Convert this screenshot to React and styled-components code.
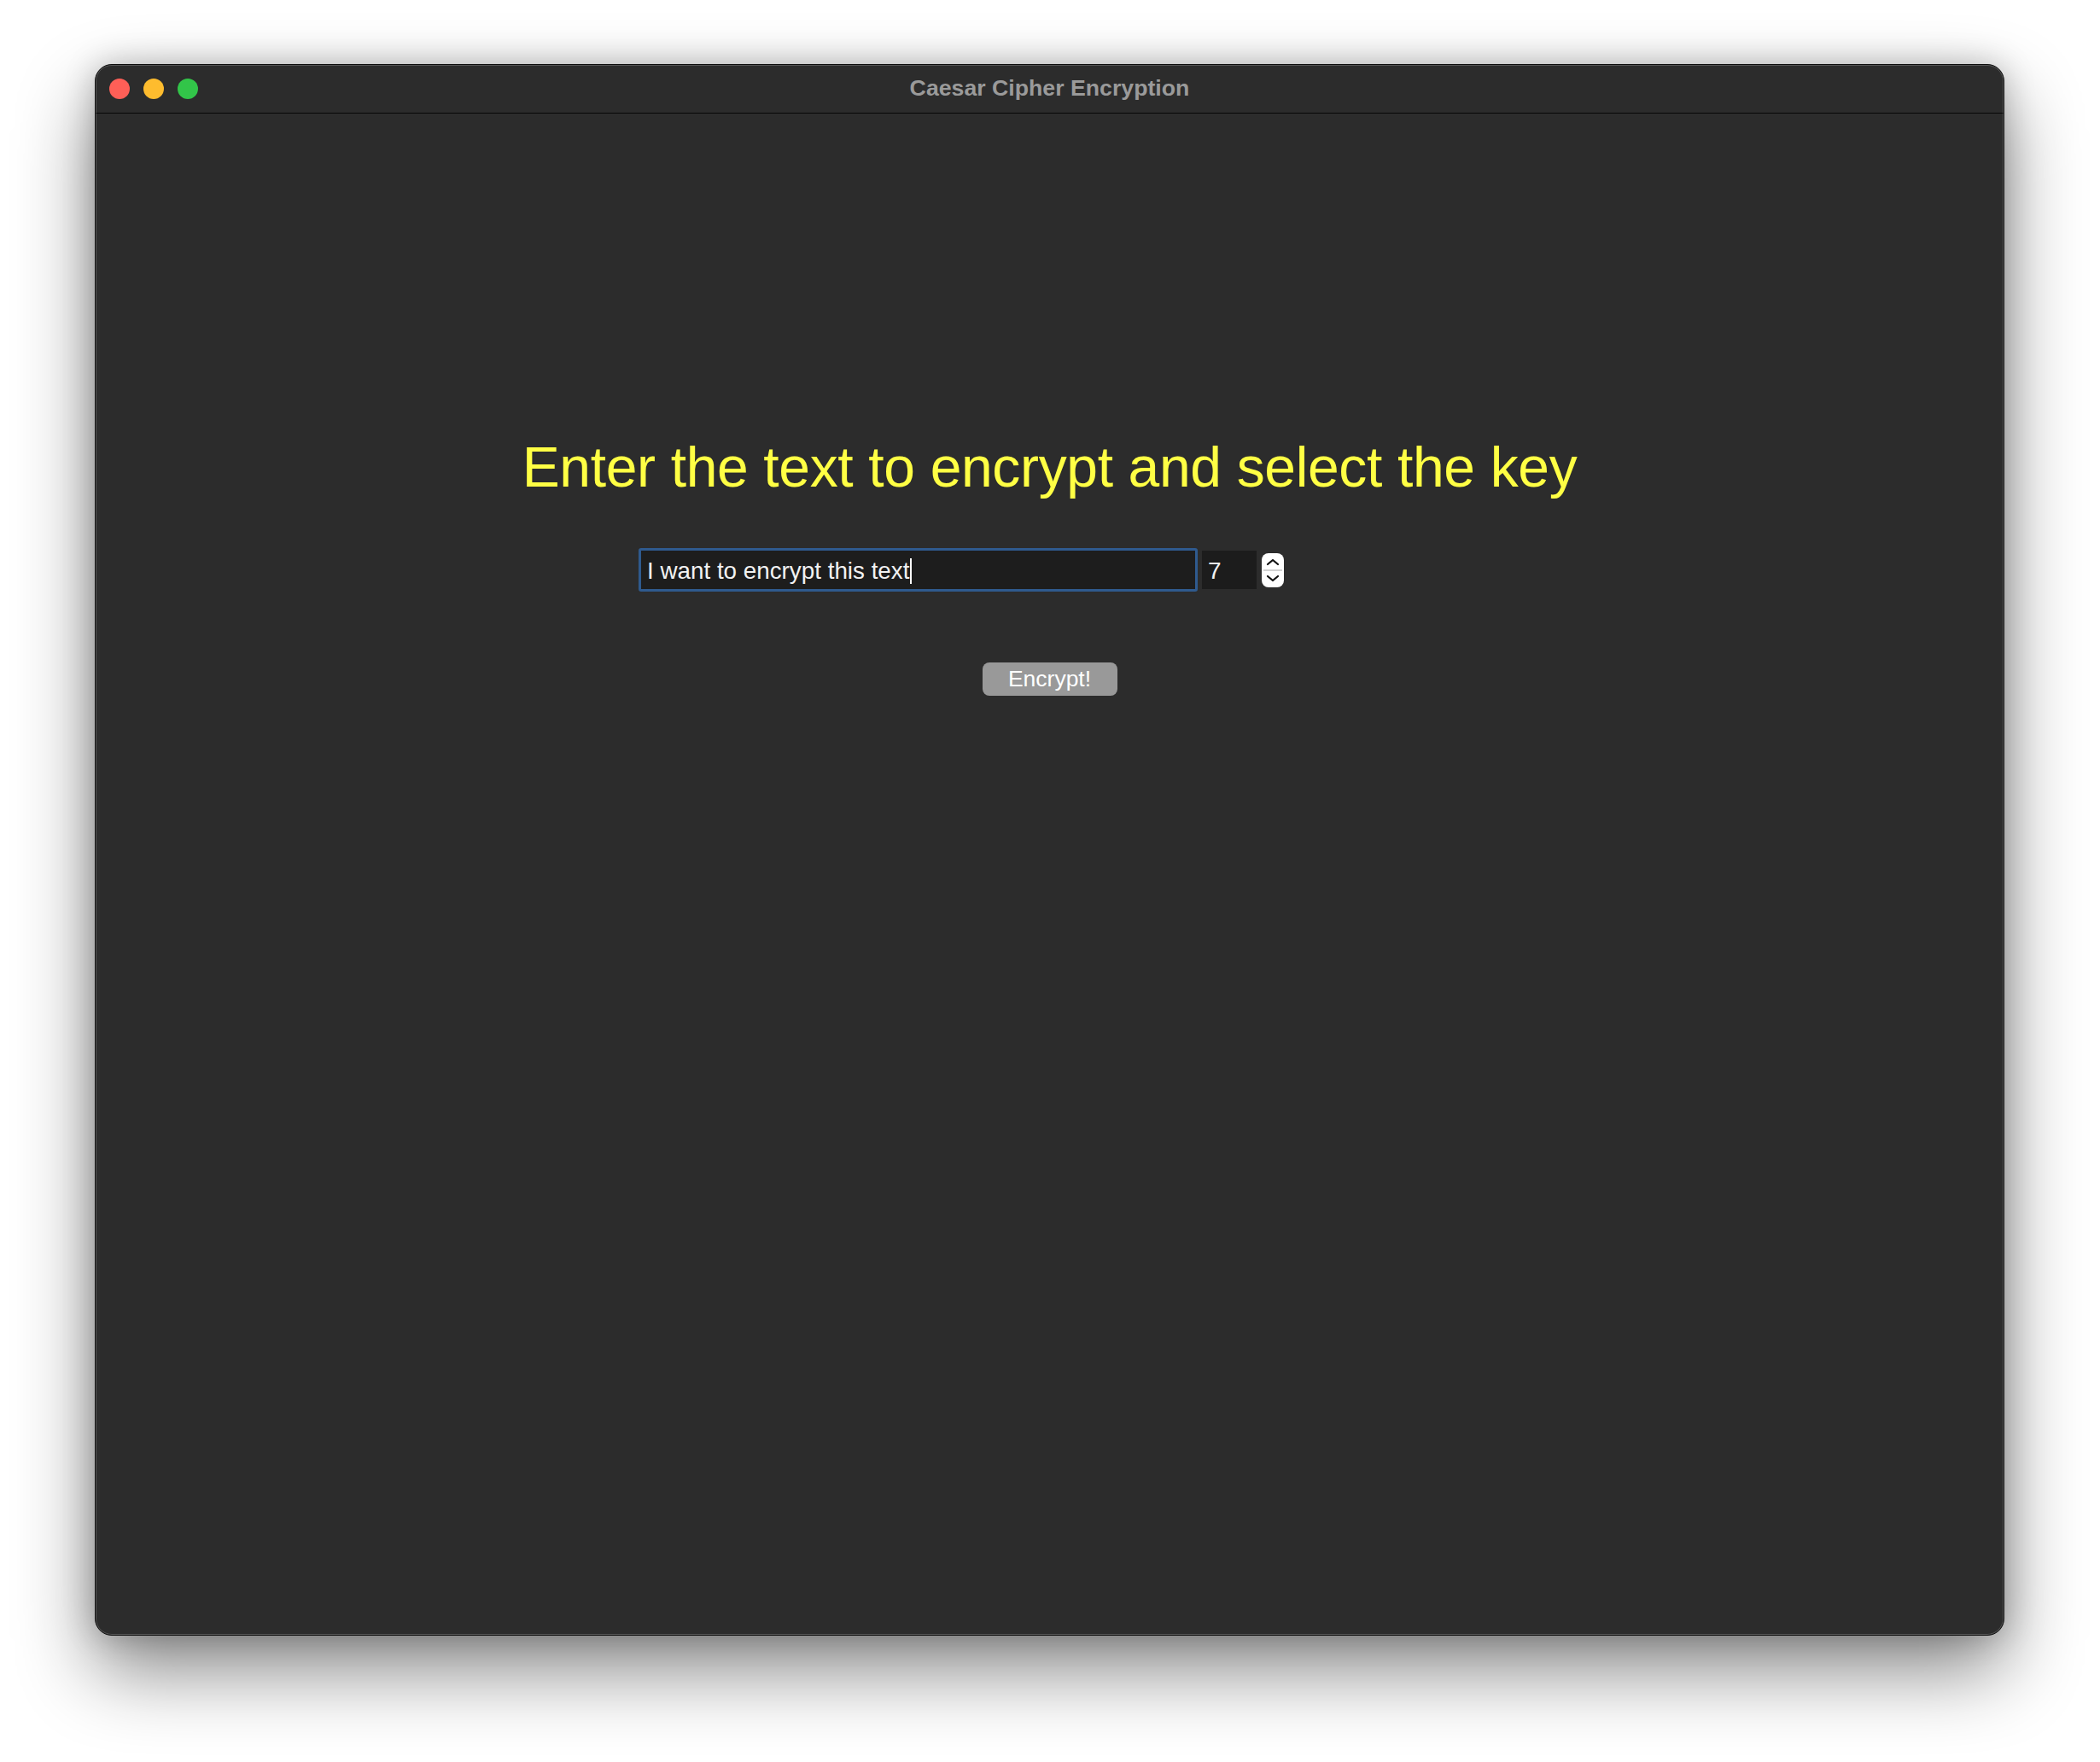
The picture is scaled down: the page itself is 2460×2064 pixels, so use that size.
import React from "react";
import styled, { createGlobalStyle } from "styled-components";

const Global = createGlobalStyle`
  html, body { margin: 0; padding: 0; background: #ffffff; }
  body { font-family: "Liberation Sans", Arial, sans-serif; }
  * { box-sizing: border-box; }
`;

const Page = styled.div`
  width: 2460px;
  height: 2064px;
  padding: 75px 0 0 111px;
  background: #ffffff;
`;

const Window = styled.div`
  position: relative;
  width: 2237px;
  height: 1841px;
  display: flex;
  flex-direction: column;
  background: #2c2c2c;
  border: 1px solid #0e0e0e;
  border-radius: 20px;
  overflow: hidden;
  box-shadow: 0 40px 90px rgba(0, 0, 0, 0.48), 0 0 36px rgba(0, 0, 0, 0.22);
  &::after {
    content: "";
    position: absolute;
    inset: 0;
    border: 1px solid rgba(255, 255, 255, 0.2);
    border-radius: 19px;
    pointer-events: none;
  }
`;

const TitleBar = styled.div`
  height: 57px;
  flex: none;
  display: grid;
  grid-template-columns: 1fr auto 1fr;
  align-items: center;
  padding: 0 16px;
  background: #2c2c2c;
  border-bottom: 1px solid #050505;
`;

const Lights = styled.div`
  display: flex;
  gap: 16px;
  align-items: center;
`;

const Light = styled.span`
  width: 24px;
  height: 24px;
  border-radius: 50%;
  background: ${(p) => p.$color};
`;

const Title = styled.div`
  font-family: "Liberation Sans", Arial, sans-serif;
  font-weight: 700;
  font-size: 26.7px;
  color: #9a9a9a;
  line-height: 1;
  padding-bottom: 2px;
`;

const Content = styled.div`
  flex: 1;
  display: flex;
  flex-direction: column;
  align-items: center;
  padding-top: 381px;
`;

const Heading = styled.h1`
  margin: 0;
  font-family: "Liberation Sans", Arial, sans-serif;
  font-weight: 400;
  font-size: 66px;
  letter-spacing: -0.35px;
  line-height: 66px;
  color: #ffff44;
  white-space: nowrap;
`;

const InputRow = styled.div`
  margin-top: 62px;
  margin-right: 207px;
  display: flex;
  align-items: center;
`;

const TextField = styled.div`
  width: 655px;
  height: 51px;
  display: flex;
  align-items: center;
  padding-left: 7px;
  padding-top: 2px;
  background: #1d1d1d;
  border: 3px solid #2f5a8e;
  border-radius: 3px;
  font-family: "Liberation Sans", Arial, sans-serif;
  font-size: 27.8px;
  color: #f2f2f2;
  white-space: nowrap;
`;

const Caret = styled.span`
  display: inline-block;
  width: 2px;
  height: 30px;
  margin-left: 1px;
  background: #ffffff;
`;

const SpinEntry = styled.div`
  margin-left: 5px;
  width: 64px;
  height: 45px;
  display: flex;
  align-items: center;
  padding-left: 7px;
  padding-top: 2px;
  background: #1c1c1c;
  font-family: "Liberation Sans", Arial, sans-serif;
  font-size: 28px;
  color: #f2f2f2;
`;

const SpinButtons = styled.div`
  margin-left: 6px;
  width: 26px;
  height: 40px;
  border-radius: 8px;
  background: #ffffff;
  display: flex;
`;

const ButtonRow = styled.div`
  margin-top: 83px;
`;

const EncryptButton = styled.button`
  width: 158px;
  height: 39px;
  border: none;
  border-radius: 8px;
  background: #999999;
  color: #ffffff;
  font-family: "Liberation Sans", Arial, sans-serif;
  font-size: 26.5px;
  padding: 0;
  cursor: pointer;
`;

export default function App() {
  return (
    <>
      <Global />
      <Page>
        <Window>
          <TitleBar>
            <Lights>
              <Light $color="#ff5f57" />
              <Light $color="#febc2e" />
              <Light $color="#32c549" />
            </Lights>
            <Title>Caesar Cipher Encryption</Title>
            <div />
          </TitleBar>
          <Content>
            <Heading>Enter the text to encrypt and select the key</Heading>
            <InputRow>
              <TextField>
                I want to encrypt this text
                <Caret />
              </TextField>
              <SpinEntry>7</SpinEntry>
              <SpinButtons>
                <svg width="26" height="40" viewBox="0 0 26 40">
                  <line x1="2" y1="20" x2="24" y2="20" stroke="#c4c4c4" strokeWidth="1.5" />
                  <polyline points="7,13 13,8 19,13" fill="none" stroke="#111" strokeWidth="2.2" strokeLinecap="round" strokeLinejoin="round" />
                  <polyline points="7,27 13,32 19,27" fill="none" stroke="#111" strokeWidth="2.2" strokeLinecap="round" strokeLinejoin="round" />
                </svg>
              </SpinButtons>
            </InputRow>
            <ButtonRow>
              <EncryptButton>Encrypt!</EncryptButton>
            </ButtonRow>
          </Content>
        </Window>
      </Page>
    </>
  );
}
